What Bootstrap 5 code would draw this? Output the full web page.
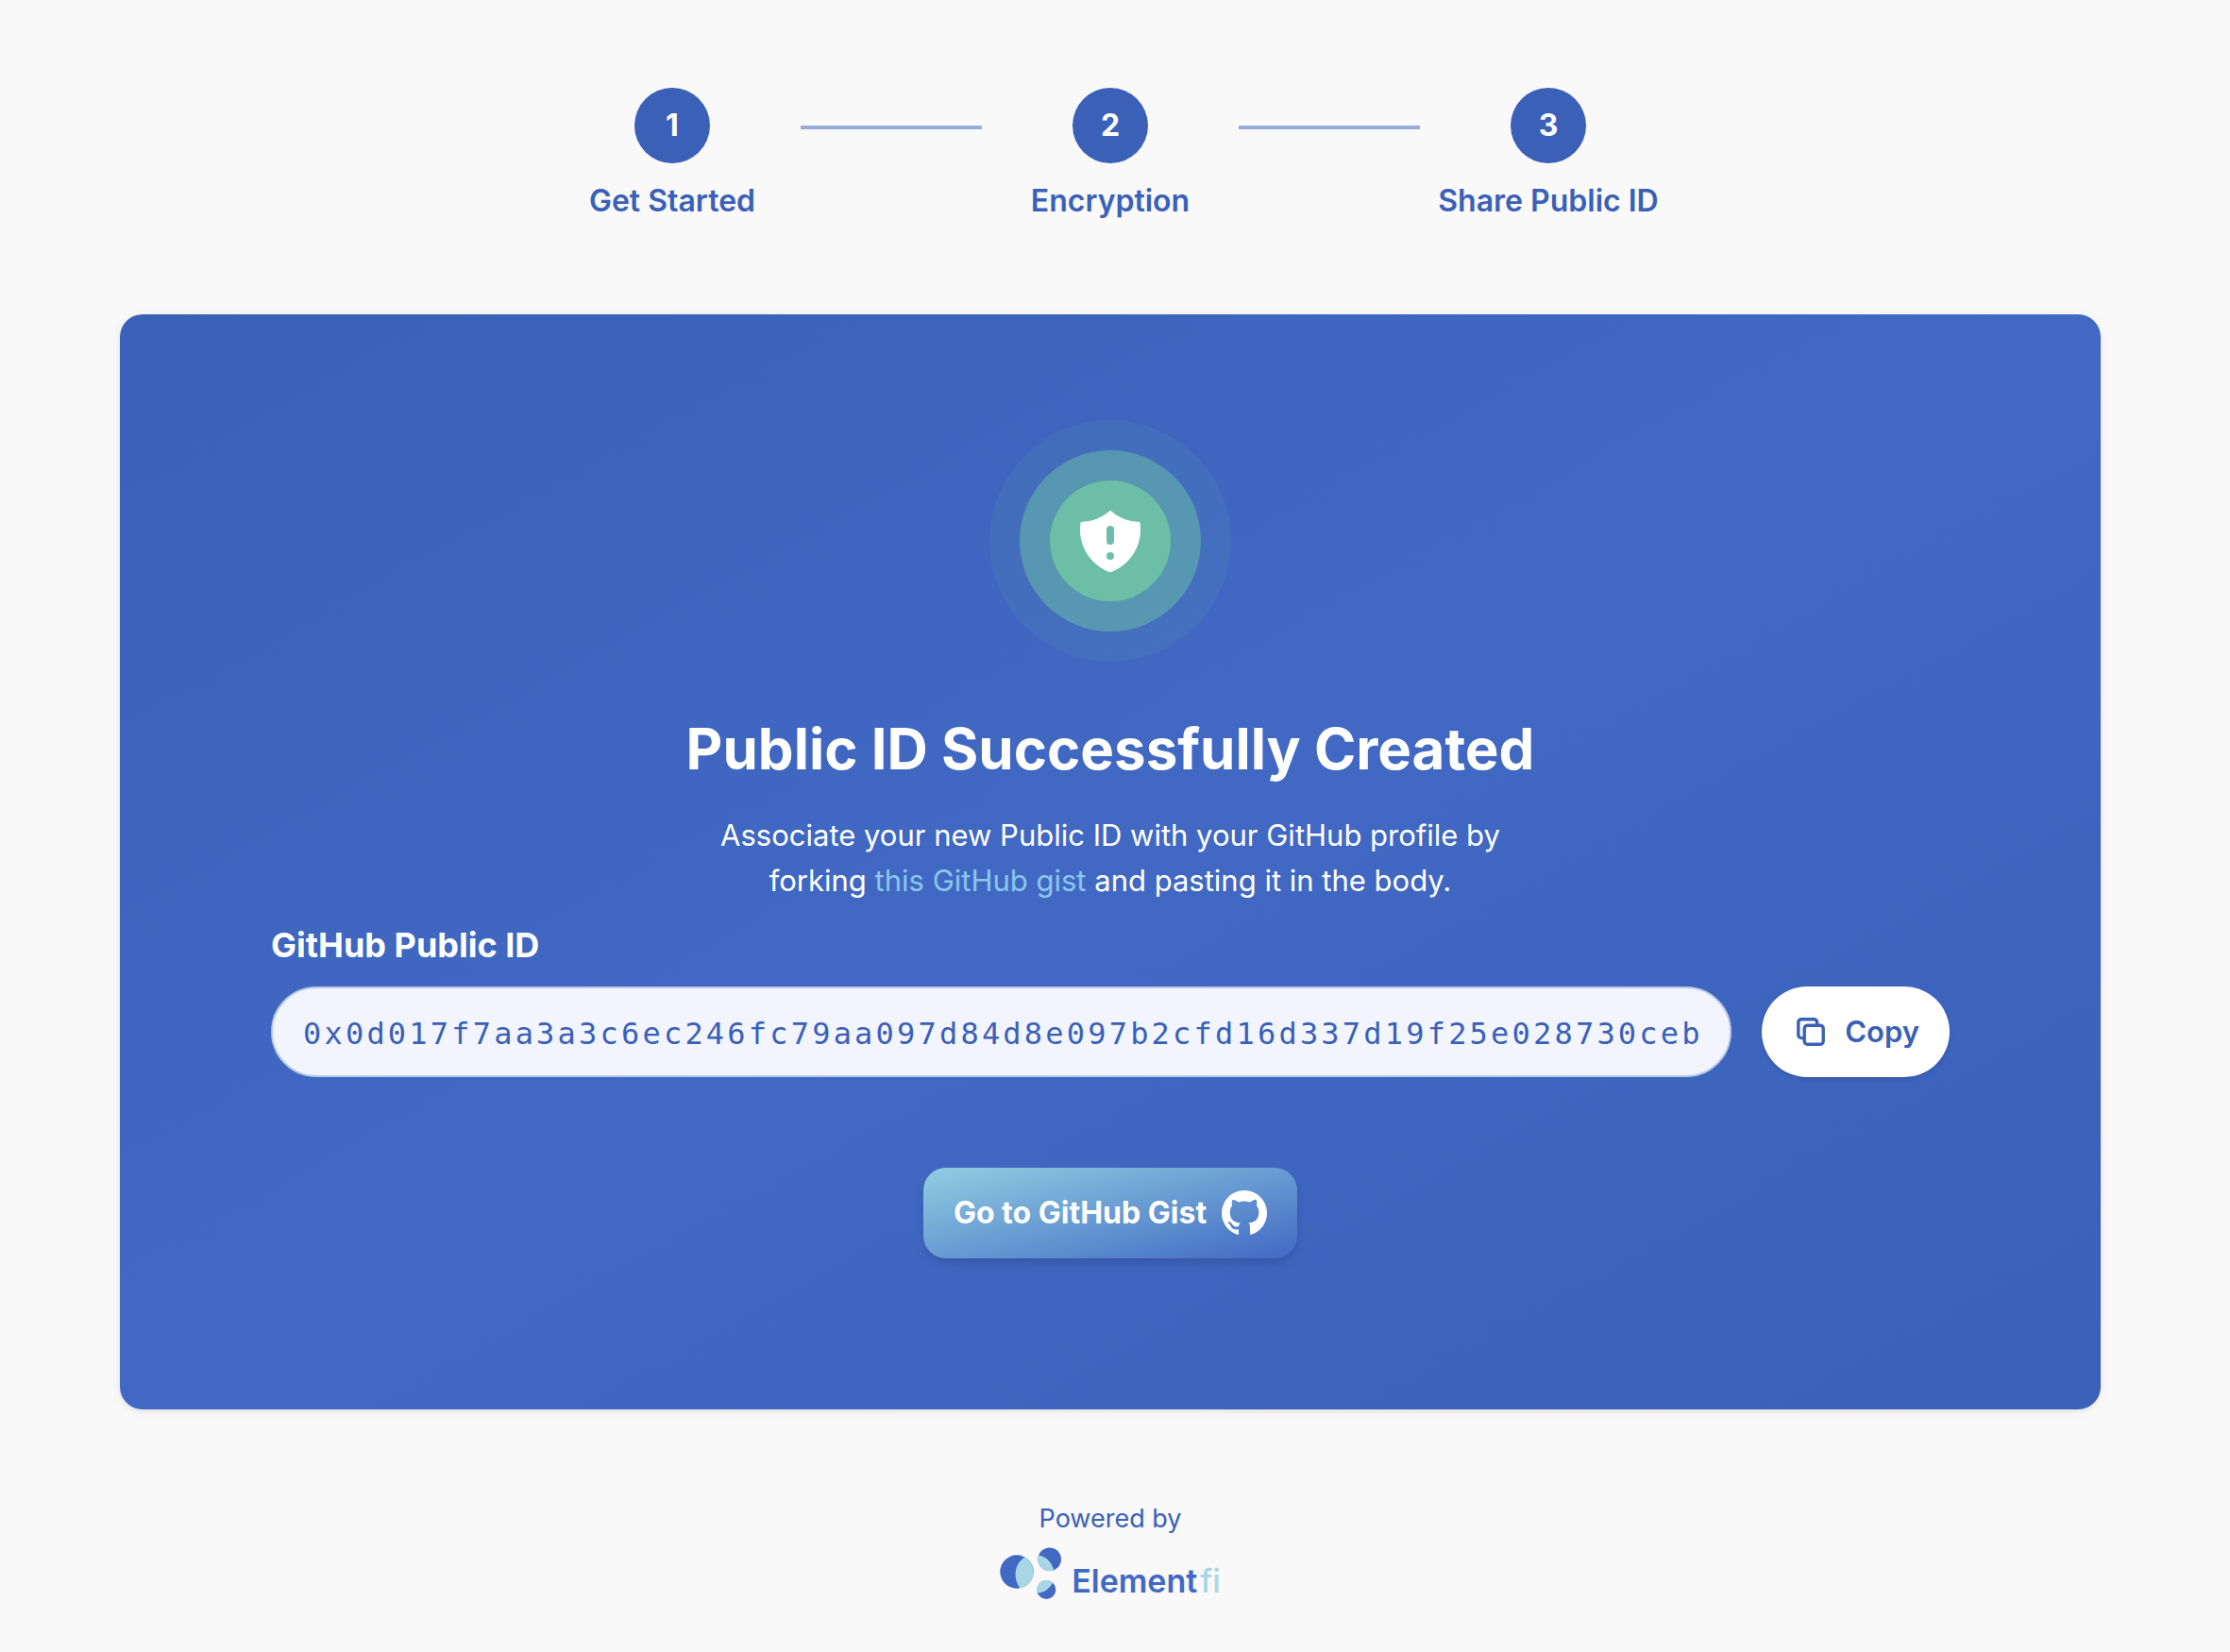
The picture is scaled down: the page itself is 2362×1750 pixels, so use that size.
<!DOCTYPE html>
<html lang="en">
<head>
<meta charset="utf-8">
<meta name="viewport" content="width=device-width, initial-scale=1">
<title>Share Public ID</title>
<link href="https://cdn.jsdelivr.net/npm/bootstrap@5.3.0/dist/css/bootstrap.min.css" rel="stylesheet">
<style>
  :root { --brand: #3a60b7; --brand-light: #4169c4; --sky: #a8d6e5; }
  body { background: #f9f9f9; color: var(--brand); font-family: Inter, "Noto Sans", sans-serif; font-size: 31px; line-height: 48px; }
  .page-shell { padding: 93px 137px 40px 127px; }
  .step-item { width: 272px; font-size: 32px; font-weight: 600; white-space: nowrap; }
  .step-num { width: 80px; height: 80px; background: var(--brand); font-size: 32px; font-weight: 700; }
  .step-line { width: 192px; height: 4px; margin-top: 40px; background: #98acda; }
  .result-panel { margin-top: 96px; padding: 112px 160px 160px; border-radius: 24px; color: #fff;
    background: linear-gradient(to bottom right, var(--brand), var(--brand-light), var(--brand));
    box-shadow: 0 2px 4px rgba(0,0,0,.06), 0 2px 12px rgba(0,0,0,.06); }
  .ring-outer, .ring-mid, .ring-inner { display: flex; align-items: center; justify-content: center; border-radius: 50%; }
  .ring-outer { width: 256px; height: 256px; background: rgba(108,191,166,.1); }
  .ring-mid { width: 192px; height: 192px; background: rgba(108,191,166,.5); }
  .ring-inner { width: 128px; height: 128px; background: #6cbfa6; }
  .result-title { margin: 56px 0 32px; font-size: 60px; line-height: 72px; font-weight: 700; }
  .result-text { max-width: 896px; margin-bottom: 24px; }
  .result-text a { color: #8bc6ea; }
  .id-label { margin-bottom: 24px; font-size: 36px; line-height: 40px; font-weight: 700; }
  .id-field { height: 96px; padding: 4px 24px 0 32px; border: 2px solid #b9c9e2; border-radius: 48px; background: #f2f5ff; color: var(--brand);
    font: 32px "DejaVu Sans Mono", monospace; letter-spacing: .1em; }
  .id-field:focus { background: #f2f5ff; color: var(--brand); }
  .copy-btn { height: 96px; padding: 0 32px; border: 0; border-radius: 48px; background: #fff; color: var(--brand); font-size: 31px; font-weight: 600;
    box-shadow: 0 2px 4px rgba(0,0,0,.12); }
  .gist-btn { height: 96px; margin-top: 96px; padding: 0 32px; border: 0; border-radius: 24px; color: #fff; font-size: 32px; font-weight: 700;
    background: linear-gradient(to bottom right, #90cee1, var(--brand-light)); box-shadow: 0 8px 12px -2px rgba(0,0,0,.1), 0 4px 8px -2px rgba(0,0,0,.06); }
  .gist-btn:hover { color: #fff; }
  .powered { margin-top: 92px; font-size: 27px; }
  .powered-logo { margin-top: 2px; font-size: 34px; font-weight: 600; color: var(--brand-light); }
  .powered-logo span span { margin-left: 3px; font-weight: 500; color: var(--sky); }
</style>
</head>
<body>
<div class="page-shell">
  <ol class="list-unstyled d-flex justify-content-center mb-0">
    <li class="step-item d-flex flex-column align-items-center gap-3">
      <span class="step-num rounded-circle text-white d-flex align-items-center justify-content-center">1</span>Get Started
    </li>
    <li class="step-line" aria-hidden="true"></li>
    <li class="step-item d-flex flex-column align-items-center gap-3">
      <span class="step-num rounded-circle text-white d-flex align-items-center justify-content-center">2</span>Encryption
    </li>
    <li class="step-line" aria-hidden="true"></li>
    <li class="step-item d-flex flex-column align-items-center gap-3">
      <span class="step-num rounded-circle text-white d-flex align-items-center justify-content-center">3</span>Share Public ID
    </li>
  </ol>

  <main class="result-panel d-flex flex-column align-items-center">
    <div class="ring-outer"><div class="ring-mid"><div class="ring-inner">
      <svg width="80" height="80" viewBox="0 0 20 20" fill="#fff" aria-hidden="true"><path fill-rule="evenodd" clip-rule="evenodd" d="M10 1.944A11.954 11.954 0 0 1 2.166 5C2.056 5.649 2 6.319 2 7c0 5.225 3.34 9.67 8 11.317C14.66 16.67 18 12.225 18 7c0-.682-.057-1.35-.166-2.001A11.954 11.954 0 0 1 10 1.944zM11 14a1 1 0 1 1-2 0 1 1 0 0 1 2 0zm0-7a1 1 0 1 0-2 0v3a1 1 0 1 0 2 0V7z"/></svg>
    </div></div></div>
    <h1 class="result-title text-center">Public ID Successfully Created</h1>
    <p class="result-text text-center">Associate your new Public ID with your GitHub profile by<br>forking <a class="text-decoration-none" href="#gist">this GitHub gist</a> and pasting it in the body.</p>
    <div class="w-100">
      <label class="id-label d-block" for="public-id">GitHub Public ID</label>
      <div class="d-flex" style="gap:32px">
        <input id="public-id" class="id-field form-control flex-grow-1" type="text" readonly value="0x0d017f7aa3a3c6ec246fc79aa097d84d8e097b2cfd16d337d19f25e028730ceb">
        <button type="button" class="copy-btn btn d-flex align-items-center gap-3 flex-shrink-0">
          <svg width="40" height="40" viewBox="0 0 40 40" fill="none" stroke="currentColor" stroke-width="3.4" stroke-linejoin="round" aria-hidden="true"><rect x="13.2" y="13.2" width="20" height="20" rx="3.2"/><path d="M13.2 26.6H10A3.2 3.2 0 0 1 6.800 23.400V10A3.200 3.200 0 0 1 10 6.800H23.400A3.200 3.200 0 0 1 26.600 10V13.200"/></svg>
          Copy
        </button>
      </div>
    </div>
    <button type="button" class="gist-btn btn d-flex align-items-center gap-3">
      Go to GitHub Gist
      <svg width="48" height="48" viewBox="0 0 16 16" fill="#fff" aria-hidden="true"><path d="M8 0C3.58 0 0 3.58 0 8c0 3.54 2.29 6.53 5.47 7.59.4.07.55-.17.55-.38 0-.19-.01-.82-.01-1.49-2.01.37-2.53-.49-2.69-.94-.09-.23-.48-.94-.82-1.13-.28-.15-.68-.52-.01-.53.63-.01 1.08.58 1.23.82.72 1.21 1.87.87 2.33.66.07-.52.28-.87.51-1.07-1.78-.2-3.64-.89-3.64-3.95 0-.87.31-1.59.82-2.15-.08-.2-.36-1.02.08-2.12 0 0 .67-.21 2.2.82.64-.18 1.32-.27 2-.27s1.36.09 2 .27c1.53-1.04 2.2-.82 2.2-.82.44 1.1.16 1.92.08 2.12.51.56.82 1.27.82 2.15 0 3.07-1.87 3.75-3.65 3.95.29.25.54.73.54 1.48 0 1.07-.01 1.93-.01 2.2 0 .21.15.46.55.38A8.01 8.01 0 0 0 16 8c0-4.42-3.58-8-8-8z"/></svg>
    </button>
  </main>

  <footer class="powered d-flex flex-column align-items-center">
    <div>Powered by</div>
    <div class="powered-logo d-flex align-items-center">
      <svg class="me-2" width="68" height="56" viewBox="0 0 68 56" fill="#4169c4" aria-hidden="true">
        <circle cx="18" cy="26" r="17.7"/><circle cx="52.7" cy="12.7" r="12.3"/><circle cx="49.3" cy="45" r="10"/>
        <g fill="#a8d6e5"><path d="M26.5 10.5A17.7 17.7 0 0 1 21.5 43.4C14 34 14.5 18 26.5 10.5Z"/><path d="M41.2 8.5A12.3 12.3 0 0 0 57.2 24.2C55.2 16.5 49.5 10 41.2 8.5Z"/><path d="M39.7 48.5A10 10 0 0 1 56 37.7C52.5 44 47 48.2 39.7 48.5Z"/></g>
      </svg>
      <span class="pt-3">Element<span>fi</span></span>
    </div>
  </footer>
</div>
<script src="https://cdn.jsdelivr.net/npm/bootstrap@5.3.0/dist/js/bootstrap.bundle.min.js"></script>
</body>
</html>
